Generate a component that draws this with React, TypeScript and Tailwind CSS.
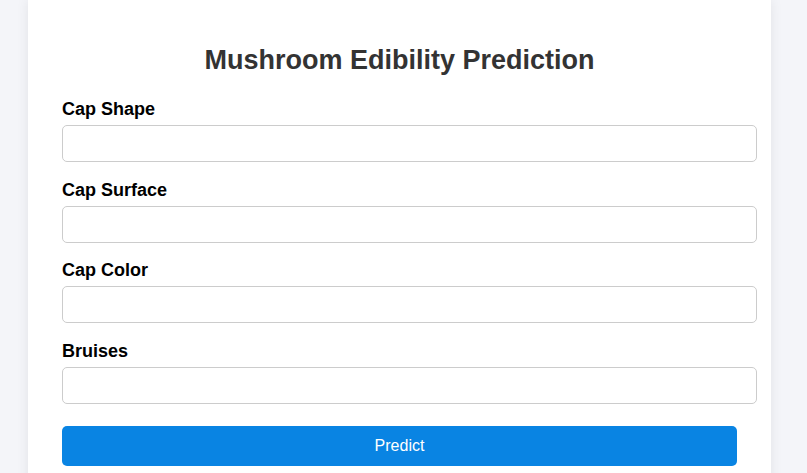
import React from 'react';

const App: React.FC = () => {
  const fields = ["Cap Shape", "Cap Surface", "Cap Color", "Bruises"];

  return (
    <div className="min-h-screen bg-[#f4f5f9] font-['Liberation_Sans',Arial,sans-serif] overflow-hidden">
      <div className="ml-[28px] w-[743px] min-h-[500px] bg-white shadow-[0_0_12px_rgba(0,0,0,0.08)] px-[34px] pt-[44px]">
        <h2 className="text-[27px] leading-[32px] font-bold text-[#333] text-center mb-[23px]">
          Mushroom Edibility Prediction
        </h2>
        <form onSubmit={(e) => e.preventDefault()}>
          {fields.map((label) => (
            <div key={label} className="mb-[17.67px]">
              <label className="block text-[18px] leading-[21px] font-bold text-black mb-[5px]">{label}</label>
              <input
                type="text"
                className="block w-[695px] h-[37px] border border-[#ccc] rounded-[5px] px-[10px] text-[16px] outline-none"
              />
            </div>
          ))}
          <button
            type="submit"
            className="w-full h-[40px] mt-[4.33px] bg-[#0984e3] text-white text-[16px] rounded-[5px]"
          >
            Predict
          </button>
        </form>
      </div>
    </div>
  );
};

export default App;
